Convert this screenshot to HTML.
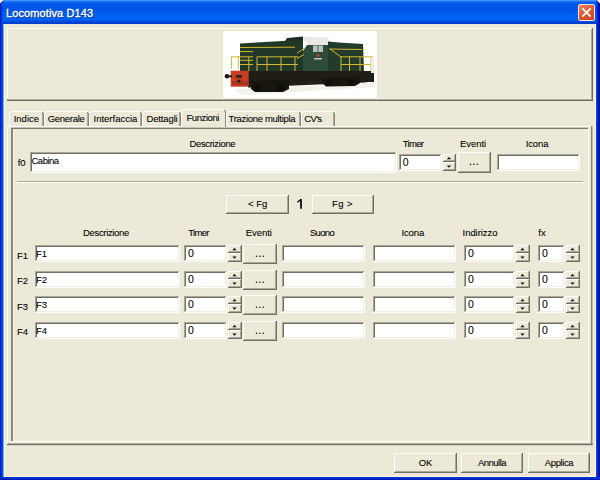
<!DOCTYPE html>
<html><head><meta charset="utf-8"><style>
html,body{margin:0;padding:0;}
body{width:600px;height:480px;position:relative;overflow:hidden;background:#ECE9D8;font-family:"Liberation Sans",sans-serif;}
body>div,body>span,body>svg{position:absolute;}
.t{white-space:pre;color:#000;-webkit-text-stroke:0.08px currentColor;}
</style></head><body>
<div style="left:0;top:0;width:600px;height:24px;background:linear-gradient(to bottom,#5AA3FF 0px,#2D7FF9 1px,#0A63F0 2px,#0057E6 4px,#0055E4 10px,#0060F2 14px,#0062F4 19px,#0056E6 21px,#0044D6 22px,#003CCB 24px);"></div>
<div style="left:0px;top:0px;width:1px;height:480px;background:#0020C8;"></div>
<div style="left:1px;top:0px;width:1px;height:480px;background:#0038DC;"></div>
<div style="left:2px;top:0px;width:1px;height:480px;background:#0050E6;"></div>
<div style="left:3px;top:24px;width:1px;height:453px;background:#7FA4DA;"></div>
<div style="left:4px;top:24px;width:1px;height:452px;background:#FFF8DA;"></div>
<div style="left:596px;top:0px;width:1px;height:480px;background:#0044EE;"></div>
<div style="left:597px;top:0px;width:1px;height:480px;background:#0028D0;"></div>
<div style="left:598px;top:0px;width:1px;height:480px;background:#0018B4;"></div>
<div style="left:599px;top:0px;width:1px;height:480px;background:#000F98;"></div>
<div style="left:595px;top:24px;width:1px;height:452px;background:#FFF8DA;"></div>
<div style="left:594px;top:24px;width:1px;height:452px;background:#ECE9D8;"></div>
<div style="left:0px;top:477px;width:600px;height:3px;background:#0030D8;"></div>
<div style="left:0px;top:479px;width:600px;height:1px;background:#0018B0;"></div>
<div style="left:4px;top:476px;width:592px;height:1px;background:#FFF8DA;"></div>
<div style="left:3px;top:476px;width:1px;height:1px;background:#7FA4DA;"></div>
<svg style="left:0;top:0" width="600" height="6"><path d="M0 0 L3.5 0 L0 3.5 Z" fill="#F4F0E0"/><path d="M600 0 L596.5 0 L600 3.5 Z" fill="#F4F0E0"/></svg>
<span class="t" style="left:6px;top:7.6px;font-size:11px;line-height:11px;font-weight:normal;-webkit-text-stroke:0.35px #fff;letter-spacing:0.1px;color:#fff;text-shadow:1px 1px 0 #0A1F7A;">Locomotiva D143</span>
<div style="left:578px;top:4px;width:15px;height:15px;border:1px solid #EDE4E0;border-radius:2px;background:linear-gradient(150deg,#EE8462 0%,#E25A32 45%,#C9441F 100%);"></div>
<svg style="left:578px;top:4px" width="17" height="17"><path d="M4.3 4.3 L12.7 12.7 M12.7 4.3 L4.3 12.7" stroke="#fff" stroke-width="1.8"/></svg>
<div style="left:7px;top:28px;width:586px;height:1px;background:#FFFFFF;"></div>
<div style="left:7px;top:28px;width:1px;height:73px;background:#FFFFFF;"></div>
<div style="left:8px;top:98px;width:584px;height:1px;background:#F1EFE2;"></div>
<div style="left:7px;top:99px;width:586px;height:1px;background:#ACA899;"></div>
<div style="left:7px;top:100px;width:586px;height:1px;background:#716F64;"></div>
<div style="left:591px;top:29px;width:1px;height:71px;background:#ACA899;"></div>
<div style="left:592px;top:28px;width:1px;height:73px;background:#716F64;"></div>
<svg style="left:223px;top:31px" width="154" height="67" viewBox="0 0 154 67"><defs><filter id="bl" x="-5%" y="-5%" width="110%" height="110%"><feGaussianBlur stdDeviation="0.35"/></filter></defs><g filter="url(#bl)">
<rect width="154" height="67" fill="#FFFFFF"/>
<path d="M10 58 L150 52 L152 56 L20 64 Z" fill="#F4F0EA"/>
<path d="M17 12.5 L64 9.8 L80 9 L80 40.5 L17 40.5 Z" fill="#203828"/>
<path d="M62 10 L64 7 L80 5.5 L80 10 Z" fill="#1C2E22"/>
<path d="M79.5 6 L103 6.3 L106 8 L106.5 14.2 L86 14.2 Z" fill="#E8E8E4"/>
<path d="M84 14 L106 14 L106 40.5 L80 40.5 L80 20 Z" fill="#2E4E38"/>
<rect x="90" y="14.5" width="10" height="6.5" fill="#B8C0BA"/>
<rect x="94.5" y="14.5" width="1" height="6.5" fill="#5A6A5E"/>
<circle cx="95" cy="24.5" r="1.3" fill="#C84A30"/>
<rect x="91" y="27" width="8" height="1.5" fill="#C8C8B8"/>
<path d="M105 10.5 L116 11.5 L140 13 L141 40.5 L105 40.5 Z" fill="#213A2A"/>
<g stroke="#D2B830" stroke-width="1" fill="none">
<path d="M17 16.5 L72 16.2"/>
<path d="M17 20.6 L30 20.6 M17 29.3 L30 29.3 M17 33.5 L30 33.5"/>
<path d="M106 18 L139 18.5 M107 18 L118 26"/>
<path d="M74 22 L81 17.5 M74 27.5 L81 23.5"/>
<path d="M8.6 25.8 L30 25.8 M8.6 25.8 L8.6 38 M15.3 25.8 L15.3 38 M25.8 25.8 L25.8 47"/>
<path d="M34 25.8 L75 25.8 M34 33.5 L75 33.5 M34 25.8 L34 46 M44 25.8 L44 40 M58 25.8 L58 40 M72 25.8 L72 40"/>
<path d="M118 25.8 L150 25.8 M118 33.5 L150 33.5 M118 25.8 L118 41 M126.5 25.8 L126.5 40 M137 25.8 L137 40 M148 25.8 L148 44"/>
</g>
<path d="M25 40 L150 40 L151 50 L142 51.5 L60 55 L30 56.5 L25 56.5 Z" fill="#241C17"/>
<path d="M28 50 L66 48.5 L66 58 L60 61 L32 61 L28 58 Z" fill="#17120E"/>
<path d="M99 47 L137 45.5 L137 52 L132 55 L103 55.5 L99 52 Z" fill="#17120E"/>
<circle cx="35" cy="57.5" r="3.5" fill="#0E0B08"/><circle cx="58" cy="57" r="3.5" fill="#0E0B08"/>
<circle cx="106" cy="52" r="3" fill="#0E0B08"/><circle cx="128" cy="51.5" r="3" fill="#0E0B08"/>
<rect x="7.7" y="39.7" width="18" height="16" fill="#C63C24"/>
<rect x="9" y="50" width="16" height="4" fill="#A83020"/>
<circle cx="4" cy="45.3" r="2.3" fill="#1A1A1A"/>
<rect x="4" y="44.3" width="5" height="2" fill="#1A1A1A"/>
<rect x="13" y="44" width="6" height="3" fill="#2A2A2A"/>
<circle cx="16" cy="50" r="1.6" fill="#1A1A1A"/>
<rect x="146" y="40" width="5" height="11" fill="#1A1A1A"/>
<path d="M148 26 L151 26 L151 42 L148 42 Z" fill="#F0ECD8"/>
</g></svg>
<div style="left:9px;top:111px;width:35px;height:15px;background:#ECE9D8;"></div>
<div style="left:11px;top:111px;width:32px;height:1px;background:#FFFFFF;"></div>
<div style="left:9px;top:113px;width:1px;height:13px;background:#FFFFFF;"></div>
<div style="left:10px;top:112px;width:1px;height:1px;background:#FFFFFF;"></div>
<div style="left:43px;top:113px;width:1px;height:13px;background:#8A8676;"></div>
<div style="left:42px;top:113px;width:1px;height:13px;background:#ADA998;"></div>
<div style="left:42px;top:112px;width:1px;height:1px;background:#8A8676;"></div>
<span class="t" style="left:13.7px;top:114.00px;font-size:9.5px;line-height:10px;color:#000;letter-spacing:0.0px;">Indice</span>
<div style="left:44px;top:111px;width:45px;height:15px;background:#ECE9D8;"></div>
<div style="left:46px;top:111px;width:42px;height:1px;background:#FFFFFF;"></div>
<div style="left:44px;top:113px;width:1px;height:13px;background:#FFFFFF;"></div>
<div style="left:45px;top:112px;width:1px;height:1px;background:#FFFFFF;"></div>
<div style="left:88px;top:113px;width:1px;height:13px;background:#8A8676;"></div>
<div style="left:87px;top:113px;width:1px;height:13px;background:#ADA998;"></div>
<div style="left:87px;top:112px;width:1px;height:1px;background:#8A8676;"></div>
<span class="t" style="left:47.7px;top:114.00px;font-size:9.5px;line-height:10px;color:#000;letter-spacing:-0.29px;">Generale</span>
<div style="left:89px;top:111px;width:53px;height:15px;background:#ECE9D8;"></div>
<div style="left:91px;top:111px;width:50px;height:1px;background:#FFFFFF;"></div>
<div style="left:89px;top:113px;width:1px;height:13px;background:#FFFFFF;"></div>
<div style="left:90px;top:112px;width:1px;height:1px;background:#FFFFFF;"></div>
<div style="left:141px;top:113px;width:1px;height:13px;background:#8A8676;"></div>
<div style="left:140px;top:113px;width:1px;height:13px;background:#ADA998;"></div>
<div style="left:140px;top:112px;width:1px;height:1px;background:#8A8676;"></div>
<span class="t" style="left:93.5px;top:114.00px;font-size:9.5px;line-height:10px;color:#000;letter-spacing:0.0px;">Interfaccia</span>
<div style="left:142px;top:111px;width:39px;height:15px;background:#ECE9D8;"></div>
<div style="left:144px;top:111px;width:36px;height:1px;background:#FFFFFF;"></div>
<div style="left:142px;top:113px;width:1px;height:13px;background:#FFFFFF;"></div>
<div style="left:143px;top:112px;width:1px;height:1px;background:#FFFFFF;"></div>
<div style="left:180px;top:113px;width:1px;height:13px;background:#8A8676;"></div>
<div style="left:179px;top:113px;width:1px;height:13px;background:#ADA998;"></div>
<div style="left:179px;top:112px;width:1px;height:1px;background:#8A8676;"></div>
<span class="t" style="left:146.5px;top:114.00px;font-size:9.5px;line-height:10px;color:#000;letter-spacing:-0.14px;">Dettagli</span>
<div style="left:226px;top:111px;width:75px;height:15px;background:#ECE9D8;"></div>
<div style="left:228px;top:111px;width:72px;height:1px;background:#FFFFFF;"></div>
<div style="left:226px;top:113px;width:1px;height:13px;background:#FFFFFF;"></div>
<div style="left:227px;top:112px;width:1px;height:1px;background:#FFFFFF;"></div>
<div style="left:300px;top:113px;width:1px;height:13px;background:#8A8676;"></div>
<div style="left:299px;top:113px;width:1px;height:13px;background:#ADA998;"></div>
<div style="left:299px;top:112px;width:1px;height:1px;background:#8A8676;"></div>
<span class="t" style="left:228.5px;top:114.00px;font-size:9.5px;line-height:10px;color:#000;letter-spacing:-0.31px;">Trazione multipla</span>
<div style="left:301px;top:111px;width:34px;height:15px;background:#ECE9D8;"></div>
<div style="left:303px;top:111px;width:31px;height:1px;background:#FFFFFF;"></div>
<div style="left:301px;top:113px;width:1px;height:13px;background:#FFFFFF;"></div>
<div style="left:302px;top:112px;width:1px;height:1px;background:#FFFFFF;"></div>
<div style="left:334px;top:113px;width:1px;height:13px;background:#8A8676;"></div>
<div style="left:333px;top:113px;width:1px;height:13px;background:#ADA998;"></div>
<div style="left:333px;top:112px;width:1px;height:1px;background:#8A8676;"></div>
<span class="t" style="left:304.3px;top:114.00px;font-size:9.5px;line-height:10px;color:#000;letter-spacing:-0.67px;">CV's</span>
<div style="left:7px;top:126px;width:585px;height:1px;background:#FFFFFF;"></div>
<div style="left:7px;top:126px;width:1px;height:319px;background:#FFFFFF;"></div>
<div style="left:591px;top:126px;width:1px;height:319px;background:#85826F;"></div>
<div style="left:592px;top:126px;width:1px;height:319px;background:#C5C1B0;"></div>
<div style="left:8px;top:443px;width:583px;height:1px;background:#B5B1A0;"></div>
<div style="left:7px;top:444px;width:586px;height:1px;background:#716F64;"></div>
<div style="left:7px;top:445px;width:586px;height:1px;background:#D8D3C6;"></div>
<div style="left:181px;top:109px;width:45px;height:18px;background:#ECE9D8;"></div>
<div style="left:183px;top:109px;width:42px;height:1px;background:#FFFFFF;"></div>
<div style="left:181px;top:111px;width:1px;height:16px;background:#FFFFFF;"></div>
<div style="left:182px;top:110px;width:1px;height:1px;background:#FFFFFF;"></div>
<div style="left:225px;top:111px;width:1px;height:16px;background:#8A8676;"></div>
<div style="left:224px;top:110px;width:1px;height:1px;background:#8A8676;"></div>
<span class="t" style="left:186.5px;top:113.00px;font-size:9.5px;line-height:10px;color:#000;letter-spacing:-0.43px;">Funzioni</span>
<div style="left:11px;top:127px;width:577px;height:1px;background:#C9C5B5;"></div>
<div style="left:11px;top:128px;width:577px;height:1px;background:#7F7B6B;"></div>
<div style="left:11px;top:128px;width:1px;height:313px;background:#8A8676;"></div>
<div style="left:12px;top:129px;width:1px;height:312px;background:#8F8B7B;"></div>
<div style="left:13px;top:129px;width:1px;height:312px;background:#F4F2E6;"></div>
<div style="left:11px;top:441px;width:578px;height:1px;background:#FFFFFF;"></div>
<div style="left:588px;top:128px;width:1px;height:314px;background:#FFFFFF;"></div>
<span class="t" style="left:112.40px;top:139.00px;width:200px;text-align:center;font-size:9.5px;line-height:10px;color:#000;letter-spacing:-0.35px;">Descrizione</span>
<span class="t" style="left:313.00px;top:139.00px;width:200px;text-align:center;font-size:9.5px;line-height:10px;color:#000;letter-spacing:-0.7px;">Timer</span>
<span class="t" style="left:373.00px;top:139.00px;width:200px;text-align:center;font-size:9.5px;line-height:10px;color:#000;letter-spacing:-0.06px;">Eventi</span>
<span class="t" style="left:437.00px;top:139.00px;width:200px;text-align:center;font-size:9.5px;line-height:10px;color:#000;letter-spacing:-0.1px;">Icona</span>
<span class="t" style="left:17.7px;top:158.00px;font-size:9.5px;line-height:10px;color:#000;">f0</span>
<div style="left:30px;top:152px;width:367px;height:21px;background:#fff;"></div>
<div style="left:30px;top:152px;width:367px;height:1px;background:#ACA899;"></div>
<div style="left:30px;top:152px;width:1px;height:21px;background:#ACA899;"></div>
<div style="left:31px;top:153px;width:365px;height:1px;background:#716F64;"></div>
<div style="left:31px;top:153px;width:1px;height:19px;background:#716F64;"></div>
<div style="left:30px;top:172px;width:367px;height:1px;background:#FFFFFF;"></div>
<div style="left:396px;top:152px;width:1px;height:21px;background:#FFFFFF;"></div>
<div style="left:31px;top:171px;width:365px;height:1px;background:#F1EFE2;"></div>
<div style="left:395px;top:153px;width:1px;height:19px;background:#F1EFE2;"></div>
<span class="t" style="left:31.5px;top:156.00px;font-size:9.5px;line-height:10px;color:#000;letter-spacing:-0.5px;">Cabina</span>
<div style="left:399px;top:154px;width:43px;height:17px;background:#fff;"></div>
<div style="left:399px;top:154px;width:43px;height:1px;background:#ACA899;"></div>
<div style="left:399px;top:154px;width:1px;height:17px;background:#ACA899;"></div>
<div style="left:400px;top:155px;width:41px;height:1px;background:#716F64;"></div>
<div style="left:400px;top:155px;width:1px;height:15px;background:#716F64;"></div>
<div style="left:399px;top:170px;width:43px;height:1px;background:#FFFFFF;"></div>
<div style="left:441px;top:154px;width:1px;height:17px;background:#FFFFFF;"></div>
<div style="left:400px;top:169px;width:41px;height:1px;background:#F1EFE2;"></div>
<div style="left:440px;top:155px;width:1px;height:15px;background:#F1EFE2;"></div>
<span class="t" style="left:402.7px;top:157.00px;font-size:10.5px;line-height:10px;color:#000;">0</span>
<div style="left:443px;top:154px;width:13px;height:8px;background:#ECE9D8;"></div>
<div style="left:443px;top:154px;width:13px;height:1px;background:#FFFFFF;"></div>
<div style="left:443px;top:154px;width:1px;height:8px;background:#FFFFFF;"></div>
<div style="left:443px;top:161px;width:13px;height:1px;background:#716F64;"></div>
<div style="left:455px;top:154px;width:1px;height:8px;background:#716F64;"></div>
<div style="left:444px;top:160px;width:11px;height:1px;background:#ACA899;"></div>
<div style="left:454px;top:155px;width:1px;height:6px;background:#ACA899;"></div>
<div style="left:443px;top:162px;width:13px;height:9px;background:#ECE9D8;"></div>
<div style="left:443px;top:162px;width:13px;height:1px;background:#FFFFFF;"></div>
<div style="left:443px;top:162px;width:1px;height:9px;background:#FFFFFF;"></div>
<div style="left:443px;top:170px;width:13px;height:1px;background:#716F64;"></div>
<div style="left:455px;top:162px;width:1px;height:9px;background:#716F64;"></div>
<div style="left:444px;top:169px;width:11px;height:1px;background:#ACA899;"></div>
<div style="left:454px;top:163px;width:1px;height:7px;background:#ACA899;"></div>
<svg style="left:443px;top:154px" width="13" height="8"><path d="M3.80 5.30 L8.20 5.30 L6.00 3.10 Z" fill="#111"/></svg>
<svg style="left:443px;top:162px" width="13" height="9"><path d="M3.80 3.50 L8.20 3.50 L6.00 5.70 Z" fill="#111"/></svg>
<div style="left:458px;top:152px;width:33px;height:21px;background:#ECE9D8;"></div>
<div style="left:458px;top:152px;width:33px;height:1px;background:#FFFFFF;"></div>
<div style="left:458px;top:152px;width:1px;height:21px;background:#FFFFFF;"></div>
<div style="left:458px;top:172px;width:33px;height:1px;background:#716F64;"></div>
<div style="left:490px;top:152px;width:1px;height:21px;background:#716F64;"></div>
<div style="left:459px;top:171px;width:31px;height:1px;background:#ACA899;"></div>
<div style="left:489px;top:153px;width:1px;height:19px;background:#ACA899;"></div>
<svg style="left:468px;top:161px" width="12" height="6"><circle cx="2.5" cy="3.2" r="0.8" fill="#1a1a1a"/><circle cx="5.8" cy="3.2" r="0.8" fill="#1a1a1a"/><circle cx="9.3" cy="3.2" r="0.8" fill="#1a1a1a"/></svg>
<div style="left:497px;top:154px;width:83px;height:17px;background:#fff;"></div>
<div style="left:497px;top:154px;width:83px;height:1px;background:#ACA899;"></div>
<div style="left:497px;top:154px;width:1px;height:17px;background:#ACA899;"></div>
<div style="left:498px;top:155px;width:81px;height:1px;background:#716F64;"></div>
<div style="left:498px;top:155px;width:1px;height:15px;background:#716F64;"></div>
<div style="left:497px;top:170px;width:83px;height:1px;background:#FFFFFF;"></div>
<div style="left:579px;top:154px;width:1px;height:17px;background:#FFFFFF;"></div>
<div style="left:498px;top:169px;width:81px;height:1px;background:#F1EFE2;"></div>
<div style="left:578px;top:155px;width:1px;height:15px;background:#F1EFE2;"></div>
<div style="left:17px;top:181px;width:566px;height:1px;background:#ACA899;"></div>
<div style="left:16px;top:182px;width:568px;height:1px;background:#FFFFFF;"></div>
<div style="left:226px;top:195px;width:63px;height:19px;background:#ECE9D8;"></div>
<div style="left:226px;top:195px;width:63px;height:1px;background:#FFFFFF;"></div>
<div style="left:226px;top:195px;width:1px;height:19px;background:#FFFFFF;"></div>
<div style="left:226px;top:213px;width:63px;height:1px;background:#716F64;"></div>
<div style="left:288px;top:195px;width:1px;height:19px;background:#716F64;"></div>
<div style="left:227px;top:212px;width:61px;height:1px;background:#ACA899;"></div>
<div style="left:287px;top:196px;width:1px;height:17px;background:#ACA899;"></div>
<span class="t" style="left:157.70px;top:199.00px;width:200px;text-align:center;font-size:9.5px;line-height:10px;color:#000;letter-spacing:0.0px;">&lt; Fg</span>
<svg style="left:292px;top:196px" width="16" height="16"><path d="M9 3.3 L9 12.8" stroke="#000" stroke-width="1.7"/><path d="M5.4 6.2 L9.2 3.3" stroke="#000" stroke-width="1.4"/></svg>
<div style="left:312px;top:195px;width:62px;height:19px;background:#ECE9D8;"></div>
<div style="left:312px;top:195px;width:62px;height:1px;background:#FFFFFF;"></div>
<div style="left:312px;top:195px;width:1px;height:19px;background:#FFFFFF;"></div>
<div style="left:312px;top:213px;width:62px;height:1px;background:#716F64;"></div>
<div style="left:373px;top:195px;width:1px;height:19px;background:#716F64;"></div>
<div style="left:313px;top:212px;width:60px;height:1px;background:#ACA899;"></div>
<div style="left:372px;top:196px;width:1px;height:17px;background:#ACA899;"></div>
<span class="t" style="left:242.50px;top:199.00px;width:200px;text-align:center;font-size:9.5px;line-height:10px;color:#000;letter-spacing:0.4px;">Fg &gt;</span>
<span class="t" style="left:6.00px;top:228.00px;width:200px;text-align:center;font-size:9.5px;line-height:10px;color:#000;letter-spacing:-0.35px;">Descrizione</span>
<span class="t" style="left:98.50px;top:228.00px;width:200px;text-align:center;font-size:9.5px;line-height:10px;color:#000;letter-spacing:-0.7px;">Timer</span>
<span class="t" style="left:158.80px;top:228.00px;width:200px;text-align:center;font-size:9.5px;line-height:10px;color:#000;letter-spacing:-0.06px;">Eventi</span>
<span class="t" style="left:222.00px;top:228.00px;width:200px;text-align:center;font-size:9.5px;line-height:10px;color:#000;letter-spacing:-0.67px;">Suono</span>
<span class="t" style="left:312.80px;top:228.00px;width:200px;text-align:center;font-size:9.5px;line-height:10px;color:#000;letter-spacing:-0.1px;">Icona</span>
<span class="t" style="left:380.00px;top:228.00px;width:200px;text-align:center;font-size:9.5px;line-height:10px;color:#000;letter-spacing:-0.06px;">Indirizzo</span>
<span class="t" style="left:442.00px;top:228.00px;width:200px;text-align:center;font-size:9.5px;line-height:10px;color:#000;">fx</span>
<span class="t" style="left:17px;top:251.00px;font-size:9.5px;line-height:10px;color:#000;">F1</span>
<div style="left:35px;top:245px;width:145px;height:17px;background:#fff;"></div>
<div style="left:35px;top:245px;width:145px;height:1px;background:#ACA899;"></div>
<div style="left:35px;top:245px;width:1px;height:17px;background:#ACA899;"></div>
<div style="left:36px;top:246px;width:143px;height:1px;background:#716F64;"></div>
<div style="left:36px;top:246px;width:1px;height:15px;background:#716F64;"></div>
<div style="left:35px;top:261px;width:145px;height:1px;background:#FFFFFF;"></div>
<div style="left:179px;top:245px;width:1px;height:17px;background:#FFFFFF;"></div>
<div style="left:36px;top:260px;width:143px;height:1px;background:#F1EFE2;"></div>
<div style="left:178px;top:246px;width:1px;height:15px;background:#F1EFE2;"></div>
<span class="t" style="left:36px;top:249.00px;font-size:9.5px;line-height:10px;color:#000;">F1</span>
<div style="left:184px;top:245px;width:43px;height:17px;background:#fff;"></div>
<div style="left:184px;top:245px;width:43px;height:1px;background:#ACA899;"></div>
<div style="left:184px;top:245px;width:1px;height:17px;background:#ACA899;"></div>
<div style="left:185px;top:246px;width:41px;height:1px;background:#716F64;"></div>
<div style="left:185px;top:246px;width:1px;height:15px;background:#716F64;"></div>
<div style="left:184px;top:261px;width:43px;height:1px;background:#FFFFFF;"></div>
<div style="left:226px;top:245px;width:1px;height:17px;background:#FFFFFF;"></div>
<div style="left:185px;top:260px;width:41px;height:1px;background:#F1EFE2;"></div>
<div style="left:225px;top:246px;width:1px;height:15px;background:#F1EFE2;"></div>
<span class="t" style="left:188px;top:248.00px;font-size:10.5px;line-height:10px;color:#000;">0</span>
<div style="left:228px;top:245px;width:14px;height:8px;background:#ECE9D8;"></div>
<div style="left:228px;top:245px;width:14px;height:1px;background:#FFFFFF;"></div>
<div style="left:228px;top:245px;width:1px;height:8px;background:#FFFFFF;"></div>
<div style="left:228px;top:252px;width:14px;height:1px;background:#716F64;"></div>
<div style="left:241px;top:245px;width:1px;height:8px;background:#716F64;"></div>
<div style="left:229px;top:251px;width:12px;height:1px;background:#ACA899;"></div>
<div style="left:240px;top:246px;width:1px;height:6px;background:#ACA899;"></div>
<div style="left:228px;top:253px;width:14px;height:9px;background:#ECE9D8;"></div>
<div style="left:228px;top:253px;width:14px;height:1px;background:#FFFFFF;"></div>
<div style="left:228px;top:253px;width:1px;height:9px;background:#FFFFFF;"></div>
<div style="left:228px;top:261px;width:14px;height:1px;background:#716F64;"></div>
<div style="left:241px;top:253px;width:1px;height:9px;background:#716F64;"></div>
<div style="left:229px;top:260px;width:12px;height:1px;background:#ACA899;"></div>
<div style="left:240px;top:254px;width:1px;height:7px;background:#ACA899;"></div>
<svg style="left:228px;top:245px" width="14" height="8"><path d="M4.30 5.30 L8.70 5.30 L6.50 3.10 Z" fill="#111"/></svg>
<svg style="left:228px;top:253px" width="14" height="9"><path d="M4.30 3.50 L8.70 3.50 L6.50 5.70 Z" fill="#111"/></svg>
<div style="left:243px;top:244px;width:34px;height:20px;background:#ECE9D8;"></div>
<div style="left:243px;top:244px;width:34px;height:1px;background:#FFFFFF;"></div>
<div style="left:243px;top:244px;width:1px;height:20px;background:#FFFFFF;"></div>
<div style="left:243px;top:263px;width:34px;height:1px;background:#716F64;"></div>
<div style="left:276px;top:244px;width:1px;height:20px;background:#716F64;"></div>
<div style="left:244px;top:262px;width:32px;height:1px;background:#ACA899;"></div>
<div style="left:275px;top:245px;width:1px;height:18px;background:#ACA899;"></div>
<svg style="left:254px;top:253px" width="12" height="6"><circle cx="2.5" cy="3.2" r="0.8" fill="#1a1a1a"/><circle cx="5.8" cy="3.2" r="0.8" fill="#1a1a1a"/><circle cx="9.3" cy="3.2" r="0.8" fill="#1a1a1a"/></svg>
<div style="left:282px;top:245px;width:83px;height:17px;background:#fff;"></div>
<div style="left:282px;top:245px;width:83px;height:1px;background:#ACA899;"></div>
<div style="left:282px;top:245px;width:1px;height:17px;background:#ACA899;"></div>
<div style="left:283px;top:246px;width:81px;height:1px;background:#716F64;"></div>
<div style="left:283px;top:246px;width:1px;height:15px;background:#716F64;"></div>
<div style="left:282px;top:261px;width:83px;height:1px;background:#FFFFFF;"></div>
<div style="left:364px;top:245px;width:1px;height:17px;background:#FFFFFF;"></div>
<div style="left:283px;top:260px;width:81px;height:1px;background:#F1EFE2;"></div>
<div style="left:363px;top:246px;width:1px;height:15px;background:#F1EFE2;"></div>
<div style="left:373px;top:245px;width:83px;height:17px;background:#fff;"></div>
<div style="left:373px;top:245px;width:83px;height:1px;background:#ACA899;"></div>
<div style="left:373px;top:245px;width:1px;height:17px;background:#ACA899;"></div>
<div style="left:374px;top:246px;width:81px;height:1px;background:#716F64;"></div>
<div style="left:374px;top:246px;width:1px;height:15px;background:#716F64;"></div>
<div style="left:373px;top:261px;width:83px;height:1px;background:#FFFFFF;"></div>
<div style="left:455px;top:245px;width:1px;height:17px;background:#FFFFFF;"></div>
<div style="left:374px;top:260px;width:81px;height:1px;background:#F1EFE2;"></div>
<div style="left:454px;top:246px;width:1px;height:15px;background:#F1EFE2;"></div>
<div style="left:464px;top:245px;width:51px;height:17px;background:#fff;"></div>
<div style="left:464px;top:245px;width:51px;height:1px;background:#ACA899;"></div>
<div style="left:464px;top:245px;width:1px;height:17px;background:#ACA899;"></div>
<div style="left:465px;top:246px;width:49px;height:1px;background:#716F64;"></div>
<div style="left:465px;top:246px;width:1px;height:15px;background:#716F64;"></div>
<div style="left:464px;top:261px;width:51px;height:1px;background:#FFFFFF;"></div>
<div style="left:514px;top:245px;width:1px;height:17px;background:#FFFFFF;"></div>
<div style="left:465px;top:260px;width:49px;height:1px;background:#F1EFE2;"></div>
<div style="left:513px;top:246px;width:1px;height:15px;background:#F1EFE2;"></div>
<span class="t" style="left:468px;top:248.00px;font-size:10.5px;line-height:10px;color:#000;">0</span>
<div style="left:516px;top:245px;width:14px;height:8px;background:#ECE9D8;"></div>
<div style="left:516px;top:245px;width:14px;height:1px;background:#FFFFFF;"></div>
<div style="left:516px;top:245px;width:1px;height:8px;background:#FFFFFF;"></div>
<div style="left:516px;top:252px;width:14px;height:1px;background:#716F64;"></div>
<div style="left:529px;top:245px;width:1px;height:8px;background:#716F64;"></div>
<div style="left:517px;top:251px;width:12px;height:1px;background:#ACA899;"></div>
<div style="left:528px;top:246px;width:1px;height:6px;background:#ACA899;"></div>
<div style="left:516px;top:253px;width:14px;height:9px;background:#ECE9D8;"></div>
<div style="left:516px;top:253px;width:14px;height:1px;background:#FFFFFF;"></div>
<div style="left:516px;top:253px;width:1px;height:9px;background:#FFFFFF;"></div>
<div style="left:516px;top:261px;width:14px;height:1px;background:#716F64;"></div>
<div style="left:529px;top:253px;width:1px;height:9px;background:#716F64;"></div>
<div style="left:517px;top:260px;width:12px;height:1px;background:#ACA899;"></div>
<div style="left:528px;top:254px;width:1px;height:7px;background:#ACA899;"></div>
<svg style="left:516px;top:245px" width="14" height="8"><path d="M4.30 5.30 L8.70 5.30 L6.50 3.10 Z" fill="#111"/></svg>
<svg style="left:516px;top:253px" width="14" height="9"><path d="M4.30 3.50 L8.70 3.50 L6.50 5.70 Z" fill="#111"/></svg>
<div style="left:538px;top:245px;width:27px;height:17px;background:#fff;"></div>
<div style="left:538px;top:245px;width:27px;height:1px;background:#ACA899;"></div>
<div style="left:538px;top:245px;width:1px;height:17px;background:#ACA899;"></div>
<div style="left:539px;top:246px;width:25px;height:1px;background:#716F64;"></div>
<div style="left:539px;top:246px;width:1px;height:15px;background:#716F64;"></div>
<div style="left:538px;top:261px;width:27px;height:1px;background:#FFFFFF;"></div>
<div style="left:564px;top:245px;width:1px;height:17px;background:#FFFFFF;"></div>
<div style="left:539px;top:260px;width:25px;height:1px;background:#F1EFE2;"></div>
<div style="left:563px;top:246px;width:1px;height:15px;background:#F1EFE2;"></div>
<span class="t" style="left:542px;top:248.00px;font-size:10.5px;line-height:10px;color:#000;">0</span>
<div style="left:566px;top:245px;width:14px;height:8px;background:#ECE9D8;"></div>
<div style="left:566px;top:245px;width:14px;height:1px;background:#FFFFFF;"></div>
<div style="left:566px;top:245px;width:1px;height:8px;background:#FFFFFF;"></div>
<div style="left:566px;top:252px;width:14px;height:1px;background:#716F64;"></div>
<div style="left:579px;top:245px;width:1px;height:8px;background:#716F64;"></div>
<div style="left:567px;top:251px;width:12px;height:1px;background:#ACA899;"></div>
<div style="left:578px;top:246px;width:1px;height:6px;background:#ACA899;"></div>
<div style="left:566px;top:253px;width:14px;height:9px;background:#ECE9D8;"></div>
<div style="left:566px;top:253px;width:14px;height:1px;background:#FFFFFF;"></div>
<div style="left:566px;top:253px;width:1px;height:9px;background:#FFFFFF;"></div>
<div style="left:566px;top:261px;width:14px;height:1px;background:#716F64;"></div>
<div style="left:579px;top:253px;width:1px;height:9px;background:#716F64;"></div>
<div style="left:567px;top:260px;width:12px;height:1px;background:#ACA899;"></div>
<div style="left:578px;top:254px;width:1px;height:7px;background:#ACA899;"></div>
<svg style="left:566px;top:245px" width="14" height="8"><path d="M4.30 5.30 L8.70 5.30 L6.50 3.10 Z" fill="#111"/></svg>
<svg style="left:566px;top:253px" width="14" height="9"><path d="M4.30 3.50 L8.70 3.50 L6.50 5.70 Z" fill="#111"/></svg>
<span class="t" style="left:17px;top:276.00px;font-size:9.5px;line-height:10px;color:#000;">F2</span>
<div style="left:35px;top:271px;width:145px;height:17px;background:#fff;"></div>
<div style="left:35px;top:271px;width:145px;height:1px;background:#ACA899;"></div>
<div style="left:35px;top:271px;width:1px;height:17px;background:#ACA899;"></div>
<div style="left:36px;top:272px;width:143px;height:1px;background:#716F64;"></div>
<div style="left:36px;top:272px;width:1px;height:15px;background:#716F64;"></div>
<div style="left:35px;top:287px;width:145px;height:1px;background:#FFFFFF;"></div>
<div style="left:179px;top:271px;width:1px;height:17px;background:#FFFFFF;"></div>
<div style="left:36px;top:286px;width:143px;height:1px;background:#F1EFE2;"></div>
<div style="left:178px;top:272px;width:1px;height:15px;background:#F1EFE2;"></div>
<span class="t" style="left:36px;top:275.00px;font-size:9.5px;line-height:10px;color:#000;">F2</span>
<div style="left:184px;top:271px;width:43px;height:17px;background:#fff;"></div>
<div style="left:184px;top:271px;width:43px;height:1px;background:#ACA899;"></div>
<div style="left:184px;top:271px;width:1px;height:17px;background:#ACA899;"></div>
<div style="left:185px;top:272px;width:41px;height:1px;background:#716F64;"></div>
<div style="left:185px;top:272px;width:1px;height:15px;background:#716F64;"></div>
<div style="left:184px;top:287px;width:43px;height:1px;background:#FFFFFF;"></div>
<div style="left:226px;top:271px;width:1px;height:17px;background:#FFFFFF;"></div>
<div style="left:185px;top:286px;width:41px;height:1px;background:#F1EFE2;"></div>
<div style="left:225px;top:272px;width:1px;height:15px;background:#F1EFE2;"></div>
<span class="t" style="left:188px;top:274.00px;font-size:10.5px;line-height:10px;color:#000;">0</span>
<div style="left:228px;top:271px;width:14px;height:8px;background:#ECE9D8;"></div>
<div style="left:228px;top:271px;width:14px;height:1px;background:#FFFFFF;"></div>
<div style="left:228px;top:271px;width:1px;height:8px;background:#FFFFFF;"></div>
<div style="left:228px;top:278px;width:14px;height:1px;background:#716F64;"></div>
<div style="left:241px;top:271px;width:1px;height:8px;background:#716F64;"></div>
<div style="left:229px;top:277px;width:12px;height:1px;background:#ACA899;"></div>
<div style="left:240px;top:272px;width:1px;height:6px;background:#ACA899;"></div>
<div style="left:228px;top:279px;width:14px;height:9px;background:#ECE9D8;"></div>
<div style="left:228px;top:279px;width:14px;height:1px;background:#FFFFFF;"></div>
<div style="left:228px;top:279px;width:1px;height:9px;background:#FFFFFF;"></div>
<div style="left:228px;top:287px;width:14px;height:1px;background:#716F64;"></div>
<div style="left:241px;top:279px;width:1px;height:9px;background:#716F64;"></div>
<div style="left:229px;top:286px;width:12px;height:1px;background:#ACA899;"></div>
<div style="left:240px;top:280px;width:1px;height:7px;background:#ACA899;"></div>
<svg style="left:228px;top:271px" width="14" height="8"><path d="M4.30 5.30 L8.70 5.30 L6.50 3.10 Z" fill="#111"/></svg>
<svg style="left:228px;top:279px" width="14" height="9"><path d="M4.30 3.50 L8.70 3.50 L6.50 5.70 Z" fill="#111"/></svg>
<div style="left:243px;top:270px;width:34px;height:20px;background:#ECE9D8;"></div>
<div style="left:243px;top:270px;width:34px;height:1px;background:#FFFFFF;"></div>
<div style="left:243px;top:270px;width:1px;height:20px;background:#FFFFFF;"></div>
<div style="left:243px;top:289px;width:34px;height:1px;background:#716F64;"></div>
<div style="left:276px;top:270px;width:1px;height:20px;background:#716F64;"></div>
<div style="left:244px;top:288px;width:32px;height:1px;background:#ACA899;"></div>
<div style="left:275px;top:271px;width:1px;height:18px;background:#ACA899;"></div>
<svg style="left:254px;top:279px" width="12" height="6"><circle cx="2.5" cy="3.2" r="0.8" fill="#1a1a1a"/><circle cx="5.8" cy="3.2" r="0.8" fill="#1a1a1a"/><circle cx="9.3" cy="3.2" r="0.8" fill="#1a1a1a"/></svg>
<div style="left:282px;top:271px;width:83px;height:17px;background:#fff;"></div>
<div style="left:282px;top:271px;width:83px;height:1px;background:#ACA899;"></div>
<div style="left:282px;top:271px;width:1px;height:17px;background:#ACA899;"></div>
<div style="left:283px;top:272px;width:81px;height:1px;background:#716F64;"></div>
<div style="left:283px;top:272px;width:1px;height:15px;background:#716F64;"></div>
<div style="left:282px;top:287px;width:83px;height:1px;background:#FFFFFF;"></div>
<div style="left:364px;top:271px;width:1px;height:17px;background:#FFFFFF;"></div>
<div style="left:283px;top:286px;width:81px;height:1px;background:#F1EFE2;"></div>
<div style="left:363px;top:272px;width:1px;height:15px;background:#F1EFE2;"></div>
<div style="left:373px;top:271px;width:83px;height:17px;background:#fff;"></div>
<div style="left:373px;top:271px;width:83px;height:1px;background:#ACA899;"></div>
<div style="left:373px;top:271px;width:1px;height:17px;background:#ACA899;"></div>
<div style="left:374px;top:272px;width:81px;height:1px;background:#716F64;"></div>
<div style="left:374px;top:272px;width:1px;height:15px;background:#716F64;"></div>
<div style="left:373px;top:287px;width:83px;height:1px;background:#FFFFFF;"></div>
<div style="left:455px;top:271px;width:1px;height:17px;background:#FFFFFF;"></div>
<div style="left:374px;top:286px;width:81px;height:1px;background:#F1EFE2;"></div>
<div style="left:454px;top:272px;width:1px;height:15px;background:#F1EFE2;"></div>
<div style="left:464px;top:271px;width:51px;height:17px;background:#fff;"></div>
<div style="left:464px;top:271px;width:51px;height:1px;background:#ACA899;"></div>
<div style="left:464px;top:271px;width:1px;height:17px;background:#ACA899;"></div>
<div style="left:465px;top:272px;width:49px;height:1px;background:#716F64;"></div>
<div style="left:465px;top:272px;width:1px;height:15px;background:#716F64;"></div>
<div style="left:464px;top:287px;width:51px;height:1px;background:#FFFFFF;"></div>
<div style="left:514px;top:271px;width:1px;height:17px;background:#FFFFFF;"></div>
<div style="left:465px;top:286px;width:49px;height:1px;background:#F1EFE2;"></div>
<div style="left:513px;top:272px;width:1px;height:15px;background:#F1EFE2;"></div>
<span class="t" style="left:468px;top:274.00px;font-size:10.5px;line-height:10px;color:#000;">0</span>
<div style="left:516px;top:271px;width:14px;height:8px;background:#ECE9D8;"></div>
<div style="left:516px;top:271px;width:14px;height:1px;background:#FFFFFF;"></div>
<div style="left:516px;top:271px;width:1px;height:8px;background:#FFFFFF;"></div>
<div style="left:516px;top:278px;width:14px;height:1px;background:#716F64;"></div>
<div style="left:529px;top:271px;width:1px;height:8px;background:#716F64;"></div>
<div style="left:517px;top:277px;width:12px;height:1px;background:#ACA899;"></div>
<div style="left:528px;top:272px;width:1px;height:6px;background:#ACA899;"></div>
<div style="left:516px;top:279px;width:14px;height:9px;background:#ECE9D8;"></div>
<div style="left:516px;top:279px;width:14px;height:1px;background:#FFFFFF;"></div>
<div style="left:516px;top:279px;width:1px;height:9px;background:#FFFFFF;"></div>
<div style="left:516px;top:287px;width:14px;height:1px;background:#716F64;"></div>
<div style="left:529px;top:279px;width:1px;height:9px;background:#716F64;"></div>
<div style="left:517px;top:286px;width:12px;height:1px;background:#ACA899;"></div>
<div style="left:528px;top:280px;width:1px;height:7px;background:#ACA899;"></div>
<svg style="left:516px;top:271px" width="14" height="8"><path d="M4.30 5.30 L8.70 5.30 L6.50 3.10 Z" fill="#111"/></svg>
<svg style="left:516px;top:279px" width="14" height="9"><path d="M4.30 3.50 L8.70 3.50 L6.50 5.70 Z" fill="#111"/></svg>
<div style="left:538px;top:271px;width:27px;height:17px;background:#fff;"></div>
<div style="left:538px;top:271px;width:27px;height:1px;background:#ACA899;"></div>
<div style="left:538px;top:271px;width:1px;height:17px;background:#ACA899;"></div>
<div style="left:539px;top:272px;width:25px;height:1px;background:#716F64;"></div>
<div style="left:539px;top:272px;width:1px;height:15px;background:#716F64;"></div>
<div style="left:538px;top:287px;width:27px;height:1px;background:#FFFFFF;"></div>
<div style="left:564px;top:271px;width:1px;height:17px;background:#FFFFFF;"></div>
<div style="left:539px;top:286px;width:25px;height:1px;background:#F1EFE2;"></div>
<div style="left:563px;top:272px;width:1px;height:15px;background:#F1EFE2;"></div>
<span class="t" style="left:542px;top:274.00px;font-size:10.5px;line-height:10px;color:#000;">0</span>
<div style="left:566px;top:271px;width:14px;height:8px;background:#ECE9D8;"></div>
<div style="left:566px;top:271px;width:14px;height:1px;background:#FFFFFF;"></div>
<div style="left:566px;top:271px;width:1px;height:8px;background:#FFFFFF;"></div>
<div style="left:566px;top:278px;width:14px;height:1px;background:#716F64;"></div>
<div style="left:579px;top:271px;width:1px;height:8px;background:#716F64;"></div>
<div style="left:567px;top:277px;width:12px;height:1px;background:#ACA899;"></div>
<div style="left:578px;top:272px;width:1px;height:6px;background:#ACA899;"></div>
<div style="left:566px;top:279px;width:14px;height:9px;background:#ECE9D8;"></div>
<div style="left:566px;top:279px;width:14px;height:1px;background:#FFFFFF;"></div>
<div style="left:566px;top:279px;width:1px;height:9px;background:#FFFFFF;"></div>
<div style="left:566px;top:287px;width:14px;height:1px;background:#716F64;"></div>
<div style="left:579px;top:279px;width:1px;height:9px;background:#716F64;"></div>
<div style="left:567px;top:286px;width:12px;height:1px;background:#ACA899;"></div>
<div style="left:578px;top:280px;width:1px;height:7px;background:#ACA899;"></div>
<svg style="left:566px;top:271px" width="14" height="8"><path d="M4.30 5.30 L8.70 5.30 L6.50 3.10 Z" fill="#111"/></svg>
<svg style="left:566px;top:279px" width="14" height="9"><path d="M4.30 3.50 L8.70 3.50 L6.50 5.70 Z" fill="#111"/></svg>
<span class="t" style="left:17px;top:302.00px;font-size:9.5px;line-height:10px;color:#000;">F3</span>
<div style="left:35px;top:296px;width:145px;height:17px;background:#fff;"></div>
<div style="left:35px;top:296px;width:145px;height:1px;background:#ACA899;"></div>
<div style="left:35px;top:296px;width:1px;height:17px;background:#ACA899;"></div>
<div style="left:36px;top:297px;width:143px;height:1px;background:#716F64;"></div>
<div style="left:36px;top:297px;width:1px;height:15px;background:#716F64;"></div>
<div style="left:35px;top:312px;width:145px;height:1px;background:#FFFFFF;"></div>
<div style="left:179px;top:296px;width:1px;height:17px;background:#FFFFFF;"></div>
<div style="left:36px;top:311px;width:143px;height:1px;background:#F1EFE2;"></div>
<div style="left:178px;top:297px;width:1px;height:15px;background:#F1EFE2;"></div>
<span class="t" style="left:36px;top:300.00px;font-size:9.5px;line-height:10px;color:#000;">F3</span>
<div style="left:184px;top:296px;width:43px;height:17px;background:#fff;"></div>
<div style="left:184px;top:296px;width:43px;height:1px;background:#ACA899;"></div>
<div style="left:184px;top:296px;width:1px;height:17px;background:#ACA899;"></div>
<div style="left:185px;top:297px;width:41px;height:1px;background:#716F64;"></div>
<div style="left:185px;top:297px;width:1px;height:15px;background:#716F64;"></div>
<div style="left:184px;top:312px;width:43px;height:1px;background:#FFFFFF;"></div>
<div style="left:226px;top:296px;width:1px;height:17px;background:#FFFFFF;"></div>
<div style="left:185px;top:311px;width:41px;height:1px;background:#F1EFE2;"></div>
<div style="left:225px;top:297px;width:1px;height:15px;background:#F1EFE2;"></div>
<span class="t" style="left:188px;top:299.00px;font-size:10.5px;line-height:10px;color:#000;">0</span>
<div style="left:228px;top:296px;width:14px;height:8px;background:#ECE9D8;"></div>
<div style="left:228px;top:296px;width:14px;height:1px;background:#FFFFFF;"></div>
<div style="left:228px;top:296px;width:1px;height:8px;background:#FFFFFF;"></div>
<div style="left:228px;top:303px;width:14px;height:1px;background:#716F64;"></div>
<div style="left:241px;top:296px;width:1px;height:8px;background:#716F64;"></div>
<div style="left:229px;top:302px;width:12px;height:1px;background:#ACA899;"></div>
<div style="left:240px;top:297px;width:1px;height:6px;background:#ACA899;"></div>
<div style="left:228px;top:304px;width:14px;height:9px;background:#ECE9D8;"></div>
<div style="left:228px;top:304px;width:14px;height:1px;background:#FFFFFF;"></div>
<div style="left:228px;top:304px;width:1px;height:9px;background:#FFFFFF;"></div>
<div style="left:228px;top:312px;width:14px;height:1px;background:#716F64;"></div>
<div style="left:241px;top:304px;width:1px;height:9px;background:#716F64;"></div>
<div style="left:229px;top:311px;width:12px;height:1px;background:#ACA899;"></div>
<div style="left:240px;top:305px;width:1px;height:7px;background:#ACA899;"></div>
<svg style="left:228px;top:296px" width="14" height="8"><path d="M4.30 5.30 L8.70 5.30 L6.50 3.10 Z" fill="#111"/></svg>
<svg style="left:228px;top:304px" width="14" height="9"><path d="M4.30 3.50 L8.70 3.50 L6.50 5.70 Z" fill="#111"/></svg>
<div style="left:243px;top:295px;width:34px;height:20px;background:#ECE9D8;"></div>
<div style="left:243px;top:295px;width:34px;height:1px;background:#FFFFFF;"></div>
<div style="left:243px;top:295px;width:1px;height:20px;background:#FFFFFF;"></div>
<div style="left:243px;top:314px;width:34px;height:1px;background:#716F64;"></div>
<div style="left:276px;top:295px;width:1px;height:20px;background:#716F64;"></div>
<div style="left:244px;top:313px;width:32px;height:1px;background:#ACA899;"></div>
<div style="left:275px;top:296px;width:1px;height:18px;background:#ACA899;"></div>
<svg style="left:254px;top:304px" width="12" height="6"><circle cx="2.5" cy="3.2" r="0.8" fill="#1a1a1a"/><circle cx="5.8" cy="3.2" r="0.8" fill="#1a1a1a"/><circle cx="9.3" cy="3.2" r="0.8" fill="#1a1a1a"/></svg>
<div style="left:282px;top:296px;width:83px;height:17px;background:#fff;"></div>
<div style="left:282px;top:296px;width:83px;height:1px;background:#ACA899;"></div>
<div style="left:282px;top:296px;width:1px;height:17px;background:#ACA899;"></div>
<div style="left:283px;top:297px;width:81px;height:1px;background:#716F64;"></div>
<div style="left:283px;top:297px;width:1px;height:15px;background:#716F64;"></div>
<div style="left:282px;top:312px;width:83px;height:1px;background:#FFFFFF;"></div>
<div style="left:364px;top:296px;width:1px;height:17px;background:#FFFFFF;"></div>
<div style="left:283px;top:311px;width:81px;height:1px;background:#F1EFE2;"></div>
<div style="left:363px;top:297px;width:1px;height:15px;background:#F1EFE2;"></div>
<div style="left:373px;top:296px;width:83px;height:17px;background:#fff;"></div>
<div style="left:373px;top:296px;width:83px;height:1px;background:#ACA899;"></div>
<div style="left:373px;top:296px;width:1px;height:17px;background:#ACA899;"></div>
<div style="left:374px;top:297px;width:81px;height:1px;background:#716F64;"></div>
<div style="left:374px;top:297px;width:1px;height:15px;background:#716F64;"></div>
<div style="left:373px;top:312px;width:83px;height:1px;background:#FFFFFF;"></div>
<div style="left:455px;top:296px;width:1px;height:17px;background:#FFFFFF;"></div>
<div style="left:374px;top:311px;width:81px;height:1px;background:#F1EFE2;"></div>
<div style="left:454px;top:297px;width:1px;height:15px;background:#F1EFE2;"></div>
<div style="left:464px;top:296px;width:51px;height:17px;background:#fff;"></div>
<div style="left:464px;top:296px;width:51px;height:1px;background:#ACA899;"></div>
<div style="left:464px;top:296px;width:1px;height:17px;background:#ACA899;"></div>
<div style="left:465px;top:297px;width:49px;height:1px;background:#716F64;"></div>
<div style="left:465px;top:297px;width:1px;height:15px;background:#716F64;"></div>
<div style="left:464px;top:312px;width:51px;height:1px;background:#FFFFFF;"></div>
<div style="left:514px;top:296px;width:1px;height:17px;background:#FFFFFF;"></div>
<div style="left:465px;top:311px;width:49px;height:1px;background:#F1EFE2;"></div>
<div style="left:513px;top:297px;width:1px;height:15px;background:#F1EFE2;"></div>
<span class="t" style="left:468px;top:299.00px;font-size:10.5px;line-height:10px;color:#000;">0</span>
<div style="left:516px;top:296px;width:14px;height:8px;background:#ECE9D8;"></div>
<div style="left:516px;top:296px;width:14px;height:1px;background:#FFFFFF;"></div>
<div style="left:516px;top:296px;width:1px;height:8px;background:#FFFFFF;"></div>
<div style="left:516px;top:303px;width:14px;height:1px;background:#716F64;"></div>
<div style="left:529px;top:296px;width:1px;height:8px;background:#716F64;"></div>
<div style="left:517px;top:302px;width:12px;height:1px;background:#ACA899;"></div>
<div style="left:528px;top:297px;width:1px;height:6px;background:#ACA899;"></div>
<div style="left:516px;top:304px;width:14px;height:9px;background:#ECE9D8;"></div>
<div style="left:516px;top:304px;width:14px;height:1px;background:#FFFFFF;"></div>
<div style="left:516px;top:304px;width:1px;height:9px;background:#FFFFFF;"></div>
<div style="left:516px;top:312px;width:14px;height:1px;background:#716F64;"></div>
<div style="left:529px;top:304px;width:1px;height:9px;background:#716F64;"></div>
<div style="left:517px;top:311px;width:12px;height:1px;background:#ACA899;"></div>
<div style="left:528px;top:305px;width:1px;height:7px;background:#ACA899;"></div>
<svg style="left:516px;top:296px" width="14" height="8"><path d="M4.30 5.30 L8.70 5.30 L6.50 3.10 Z" fill="#111"/></svg>
<svg style="left:516px;top:304px" width="14" height="9"><path d="M4.30 3.50 L8.70 3.50 L6.50 5.70 Z" fill="#111"/></svg>
<div style="left:538px;top:296px;width:27px;height:17px;background:#fff;"></div>
<div style="left:538px;top:296px;width:27px;height:1px;background:#ACA899;"></div>
<div style="left:538px;top:296px;width:1px;height:17px;background:#ACA899;"></div>
<div style="left:539px;top:297px;width:25px;height:1px;background:#716F64;"></div>
<div style="left:539px;top:297px;width:1px;height:15px;background:#716F64;"></div>
<div style="left:538px;top:312px;width:27px;height:1px;background:#FFFFFF;"></div>
<div style="left:564px;top:296px;width:1px;height:17px;background:#FFFFFF;"></div>
<div style="left:539px;top:311px;width:25px;height:1px;background:#F1EFE2;"></div>
<div style="left:563px;top:297px;width:1px;height:15px;background:#F1EFE2;"></div>
<span class="t" style="left:542px;top:299.00px;font-size:10.5px;line-height:10px;color:#000;">0</span>
<div style="left:566px;top:296px;width:14px;height:8px;background:#ECE9D8;"></div>
<div style="left:566px;top:296px;width:14px;height:1px;background:#FFFFFF;"></div>
<div style="left:566px;top:296px;width:1px;height:8px;background:#FFFFFF;"></div>
<div style="left:566px;top:303px;width:14px;height:1px;background:#716F64;"></div>
<div style="left:579px;top:296px;width:1px;height:8px;background:#716F64;"></div>
<div style="left:567px;top:302px;width:12px;height:1px;background:#ACA899;"></div>
<div style="left:578px;top:297px;width:1px;height:6px;background:#ACA899;"></div>
<div style="left:566px;top:304px;width:14px;height:9px;background:#ECE9D8;"></div>
<div style="left:566px;top:304px;width:14px;height:1px;background:#FFFFFF;"></div>
<div style="left:566px;top:304px;width:1px;height:9px;background:#FFFFFF;"></div>
<div style="left:566px;top:312px;width:14px;height:1px;background:#716F64;"></div>
<div style="left:579px;top:304px;width:1px;height:9px;background:#716F64;"></div>
<div style="left:567px;top:311px;width:12px;height:1px;background:#ACA899;"></div>
<div style="left:578px;top:305px;width:1px;height:7px;background:#ACA899;"></div>
<svg style="left:566px;top:296px" width="14" height="8"><path d="M4.30 5.30 L8.70 5.30 L6.50 3.10 Z" fill="#111"/></svg>
<svg style="left:566px;top:304px" width="14" height="9"><path d="M4.30 3.50 L8.70 3.50 L6.50 5.70 Z" fill="#111"/></svg>
<span class="t" style="left:17px;top:327.00px;font-size:9.5px;line-height:10px;color:#000;">F4</span>
<div style="left:35px;top:322px;width:145px;height:17px;background:#fff;"></div>
<div style="left:35px;top:322px;width:145px;height:1px;background:#ACA899;"></div>
<div style="left:35px;top:322px;width:1px;height:17px;background:#ACA899;"></div>
<div style="left:36px;top:323px;width:143px;height:1px;background:#716F64;"></div>
<div style="left:36px;top:323px;width:1px;height:15px;background:#716F64;"></div>
<div style="left:35px;top:338px;width:145px;height:1px;background:#FFFFFF;"></div>
<div style="left:179px;top:322px;width:1px;height:17px;background:#FFFFFF;"></div>
<div style="left:36px;top:337px;width:143px;height:1px;background:#F1EFE2;"></div>
<div style="left:178px;top:323px;width:1px;height:15px;background:#F1EFE2;"></div>
<span class="t" style="left:36px;top:326.00px;font-size:9.5px;line-height:10px;color:#000;">F4</span>
<div style="left:184px;top:322px;width:43px;height:17px;background:#fff;"></div>
<div style="left:184px;top:322px;width:43px;height:1px;background:#ACA899;"></div>
<div style="left:184px;top:322px;width:1px;height:17px;background:#ACA899;"></div>
<div style="left:185px;top:323px;width:41px;height:1px;background:#716F64;"></div>
<div style="left:185px;top:323px;width:1px;height:15px;background:#716F64;"></div>
<div style="left:184px;top:338px;width:43px;height:1px;background:#FFFFFF;"></div>
<div style="left:226px;top:322px;width:1px;height:17px;background:#FFFFFF;"></div>
<div style="left:185px;top:337px;width:41px;height:1px;background:#F1EFE2;"></div>
<div style="left:225px;top:323px;width:1px;height:15px;background:#F1EFE2;"></div>
<span class="t" style="left:188px;top:325.00px;font-size:10.5px;line-height:10px;color:#000;">0</span>
<div style="left:228px;top:322px;width:14px;height:8px;background:#ECE9D8;"></div>
<div style="left:228px;top:322px;width:14px;height:1px;background:#FFFFFF;"></div>
<div style="left:228px;top:322px;width:1px;height:8px;background:#FFFFFF;"></div>
<div style="left:228px;top:329px;width:14px;height:1px;background:#716F64;"></div>
<div style="left:241px;top:322px;width:1px;height:8px;background:#716F64;"></div>
<div style="left:229px;top:328px;width:12px;height:1px;background:#ACA899;"></div>
<div style="left:240px;top:323px;width:1px;height:6px;background:#ACA899;"></div>
<div style="left:228px;top:330px;width:14px;height:9px;background:#ECE9D8;"></div>
<div style="left:228px;top:330px;width:14px;height:1px;background:#FFFFFF;"></div>
<div style="left:228px;top:330px;width:1px;height:9px;background:#FFFFFF;"></div>
<div style="left:228px;top:338px;width:14px;height:1px;background:#716F64;"></div>
<div style="left:241px;top:330px;width:1px;height:9px;background:#716F64;"></div>
<div style="left:229px;top:337px;width:12px;height:1px;background:#ACA899;"></div>
<div style="left:240px;top:331px;width:1px;height:7px;background:#ACA899;"></div>
<svg style="left:228px;top:322px" width="14" height="8"><path d="M4.30 5.30 L8.70 5.30 L6.50 3.10 Z" fill="#111"/></svg>
<svg style="left:228px;top:330px" width="14" height="9"><path d="M4.30 3.50 L8.70 3.50 L6.50 5.70 Z" fill="#111"/></svg>
<div style="left:243px;top:321px;width:34px;height:20px;background:#ECE9D8;"></div>
<div style="left:243px;top:321px;width:34px;height:1px;background:#FFFFFF;"></div>
<div style="left:243px;top:321px;width:1px;height:20px;background:#FFFFFF;"></div>
<div style="left:243px;top:340px;width:34px;height:1px;background:#716F64;"></div>
<div style="left:276px;top:321px;width:1px;height:20px;background:#716F64;"></div>
<div style="left:244px;top:339px;width:32px;height:1px;background:#ACA899;"></div>
<div style="left:275px;top:322px;width:1px;height:18px;background:#ACA899;"></div>
<svg style="left:254px;top:330px" width="12" height="6"><circle cx="2.5" cy="3.2" r="0.8" fill="#1a1a1a"/><circle cx="5.8" cy="3.2" r="0.8" fill="#1a1a1a"/><circle cx="9.3" cy="3.2" r="0.8" fill="#1a1a1a"/></svg>
<div style="left:282px;top:322px;width:83px;height:17px;background:#fff;"></div>
<div style="left:282px;top:322px;width:83px;height:1px;background:#ACA899;"></div>
<div style="left:282px;top:322px;width:1px;height:17px;background:#ACA899;"></div>
<div style="left:283px;top:323px;width:81px;height:1px;background:#716F64;"></div>
<div style="left:283px;top:323px;width:1px;height:15px;background:#716F64;"></div>
<div style="left:282px;top:338px;width:83px;height:1px;background:#FFFFFF;"></div>
<div style="left:364px;top:322px;width:1px;height:17px;background:#FFFFFF;"></div>
<div style="left:283px;top:337px;width:81px;height:1px;background:#F1EFE2;"></div>
<div style="left:363px;top:323px;width:1px;height:15px;background:#F1EFE2;"></div>
<div style="left:373px;top:322px;width:83px;height:17px;background:#fff;"></div>
<div style="left:373px;top:322px;width:83px;height:1px;background:#ACA899;"></div>
<div style="left:373px;top:322px;width:1px;height:17px;background:#ACA899;"></div>
<div style="left:374px;top:323px;width:81px;height:1px;background:#716F64;"></div>
<div style="left:374px;top:323px;width:1px;height:15px;background:#716F64;"></div>
<div style="left:373px;top:338px;width:83px;height:1px;background:#FFFFFF;"></div>
<div style="left:455px;top:322px;width:1px;height:17px;background:#FFFFFF;"></div>
<div style="left:374px;top:337px;width:81px;height:1px;background:#F1EFE2;"></div>
<div style="left:454px;top:323px;width:1px;height:15px;background:#F1EFE2;"></div>
<div style="left:464px;top:322px;width:51px;height:17px;background:#fff;"></div>
<div style="left:464px;top:322px;width:51px;height:1px;background:#ACA899;"></div>
<div style="left:464px;top:322px;width:1px;height:17px;background:#ACA899;"></div>
<div style="left:465px;top:323px;width:49px;height:1px;background:#716F64;"></div>
<div style="left:465px;top:323px;width:1px;height:15px;background:#716F64;"></div>
<div style="left:464px;top:338px;width:51px;height:1px;background:#FFFFFF;"></div>
<div style="left:514px;top:322px;width:1px;height:17px;background:#FFFFFF;"></div>
<div style="left:465px;top:337px;width:49px;height:1px;background:#F1EFE2;"></div>
<div style="left:513px;top:323px;width:1px;height:15px;background:#F1EFE2;"></div>
<span class="t" style="left:468px;top:325.00px;font-size:10.5px;line-height:10px;color:#000;">0</span>
<div style="left:516px;top:322px;width:14px;height:8px;background:#ECE9D8;"></div>
<div style="left:516px;top:322px;width:14px;height:1px;background:#FFFFFF;"></div>
<div style="left:516px;top:322px;width:1px;height:8px;background:#FFFFFF;"></div>
<div style="left:516px;top:329px;width:14px;height:1px;background:#716F64;"></div>
<div style="left:529px;top:322px;width:1px;height:8px;background:#716F64;"></div>
<div style="left:517px;top:328px;width:12px;height:1px;background:#ACA899;"></div>
<div style="left:528px;top:323px;width:1px;height:6px;background:#ACA899;"></div>
<div style="left:516px;top:330px;width:14px;height:9px;background:#ECE9D8;"></div>
<div style="left:516px;top:330px;width:14px;height:1px;background:#FFFFFF;"></div>
<div style="left:516px;top:330px;width:1px;height:9px;background:#FFFFFF;"></div>
<div style="left:516px;top:338px;width:14px;height:1px;background:#716F64;"></div>
<div style="left:529px;top:330px;width:1px;height:9px;background:#716F64;"></div>
<div style="left:517px;top:337px;width:12px;height:1px;background:#ACA899;"></div>
<div style="left:528px;top:331px;width:1px;height:7px;background:#ACA899;"></div>
<svg style="left:516px;top:322px" width="14" height="8"><path d="M4.30 5.30 L8.70 5.30 L6.50 3.10 Z" fill="#111"/></svg>
<svg style="left:516px;top:330px" width="14" height="9"><path d="M4.30 3.50 L8.70 3.50 L6.50 5.70 Z" fill="#111"/></svg>
<div style="left:538px;top:322px;width:27px;height:17px;background:#fff;"></div>
<div style="left:538px;top:322px;width:27px;height:1px;background:#ACA899;"></div>
<div style="left:538px;top:322px;width:1px;height:17px;background:#ACA899;"></div>
<div style="left:539px;top:323px;width:25px;height:1px;background:#716F64;"></div>
<div style="left:539px;top:323px;width:1px;height:15px;background:#716F64;"></div>
<div style="left:538px;top:338px;width:27px;height:1px;background:#FFFFFF;"></div>
<div style="left:564px;top:322px;width:1px;height:17px;background:#FFFFFF;"></div>
<div style="left:539px;top:337px;width:25px;height:1px;background:#F1EFE2;"></div>
<div style="left:563px;top:323px;width:1px;height:15px;background:#F1EFE2;"></div>
<span class="t" style="left:542px;top:325.00px;font-size:10.5px;line-height:10px;color:#000;">0</span>
<div style="left:566px;top:322px;width:14px;height:8px;background:#ECE9D8;"></div>
<div style="left:566px;top:322px;width:14px;height:1px;background:#FFFFFF;"></div>
<div style="left:566px;top:322px;width:1px;height:8px;background:#FFFFFF;"></div>
<div style="left:566px;top:329px;width:14px;height:1px;background:#716F64;"></div>
<div style="left:579px;top:322px;width:1px;height:8px;background:#716F64;"></div>
<div style="left:567px;top:328px;width:12px;height:1px;background:#ACA899;"></div>
<div style="left:578px;top:323px;width:1px;height:6px;background:#ACA899;"></div>
<div style="left:566px;top:330px;width:14px;height:9px;background:#ECE9D8;"></div>
<div style="left:566px;top:330px;width:14px;height:1px;background:#FFFFFF;"></div>
<div style="left:566px;top:330px;width:1px;height:9px;background:#FFFFFF;"></div>
<div style="left:566px;top:338px;width:14px;height:1px;background:#716F64;"></div>
<div style="left:579px;top:330px;width:1px;height:9px;background:#716F64;"></div>
<div style="left:567px;top:337px;width:12px;height:1px;background:#ACA899;"></div>
<div style="left:578px;top:331px;width:1px;height:7px;background:#ACA899;"></div>
<svg style="left:566px;top:322px" width="14" height="8"><path d="M4.30 5.30 L8.70 5.30 L6.50 3.10 Z" fill="#111"/></svg>
<svg style="left:566px;top:330px" width="14" height="9"><path d="M4.30 3.50 L8.70 3.50 L6.50 5.70 Z" fill="#111"/></svg>
<div style="left:394px;top:453px;width:63px;height:20px;background:#ECE9D8;"></div>
<div style="left:394px;top:453px;width:63px;height:1px;background:#FFFFFF;"></div>
<div style="left:394px;top:453px;width:1px;height:20px;background:#FFFFFF;"></div>
<div style="left:394px;top:472px;width:63px;height:1px;background:#716F64;"></div>
<div style="left:456px;top:453px;width:1px;height:20px;background:#716F64;"></div>
<div style="left:395px;top:471px;width:61px;height:1px;background:#ACA899;"></div>
<div style="left:455px;top:454px;width:1px;height:18px;background:#ACA899;"></div>
<span class="t" style="left:325.50px;top:458.00px;width:200px;text-align:center;font-size:9.5px;line-height:10px;color:#000;">OK</span>
<div style="left:461px;top:453px;width:62px;height:20px;background:#ECE9D8;"></div>
<div style="left:461px;top:453px;width:62px;height:1px;background:#FFFFFF;"></div>
<div style="left:461px;top:453px;width:1px;height:20px;background:#FFFFFF;"></div>
<div style="left:461px;top:472px;width:62px;height:1px;background:#716F64;"></div>
<div style="left:522px;top:453px;width:1px;height:20px;background:#716F64;"></div>
<div style="left:462px;top:471px;width:60px;height:1px;background:#ACA899;"></div>
<div style="left:521px;top:454px;width:1px;height:18px;background:#ACA899;"></div>
<span class="t" style="left:392.00px;top:458.00px;width:200px;text-align:center;font-size:9.5px;line-height:10px;color:#000;letter-spacing:-0.5px;">Annulla</span>
<div style="left:528px;top:453px;width:62px;height:20px;background:#ECE9D8;"></div>
<div style="left:528px;top:453px;width:62px;height:1px;background:#FFFFFF;"></div>
<div style="left:528px;top:453px;width:1px;height:20px;background:#FFFFFF;"></div>
<div style="left:528px;top:472px;width:62px;height:1px;background:#716F64;"></div>
<div style="left:589px;top:453px;width:1px;height:20px;background:#716F64;"></div>
<div style="left:529px;top:471px;width:60px;height:1px;background:#ACA899;"></div>
<div style="left:588px;top:454px;width:1px;height:18px;background:#ACA899;"></div>
<span class="t" style="left:459.00px;top:458.00px;width:200px;text-align:center;font-size:9.5px;line-height:10px;color:#000;letter-spacing:-0.4px;">Applica</span>
</body></html>
